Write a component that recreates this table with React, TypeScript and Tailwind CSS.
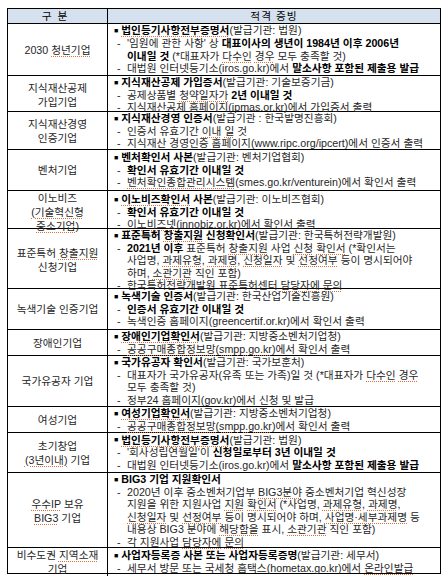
import type { ReactNode } from "react";

const font = { fontFamily: '"Liberation Sans", "Noto Sans CJK KR", sans-serif' };

function U({ children }: { children: ReactNode }) {
  return (
    <span className="underline decoration-dotted decoration-[#e0703a] decoration-[1px] underline-offset-[2px]">
      {children}
    </span>
  );
}

function B({ children }: { children: ReactNode }) {
  return <span className="font-bold text-black">{children}</span>;
}

function Head({ children }: { children: ReactNode }) {
  return (
    <div className="flex items-center whitespace-nowrap">
      <span className="mr-[3px] text-[7px] leading-none text-black">■</span>
      <span>{children}</span>
    </div>
  );
}

function Dash({ children }: { children: ReactNode }) {
  return (
    <div className="flex whitespace-nowrap pl-[3px]">
      <span className="w-[10px] shrink-0">-</span>
      <span>{children}</span>
    </div>
  );
}

function More({ children }: { children: ReactNode }) {
  return <div className="whitespace-nowrap pl-[13px]">{children}</div>;
}

function Row({ h, label, children }: { h: string; label: ReactNode; children: ReactNode }) {
  return (
    <div className={`grid grid-cols-[100px_1fr] border-t border-black ${h}`}>
      <div className="flex flex-col items-center justify-center border-r border-black text-center leading-[14px]">
        {label}
      </div>
      <div className="flex flex-col justify-center pl-[6px] leading-[12.6px]">{children}</div>
    </div>
  );
}

export default function App() {
  return (
    <div className="h-[580px] w-[448px] bg-white pt-2 pl-[7px] text-[10.7px] text-[#262626]" style={font}>
      <div className="w-[434px] border border-black">
        <div className="grid h-[14px] grid-cols-[100px_1fr] bg-[#d6e1ef] leading-[14px] text-black">
          <div className="border-r border-black text-center tracking-[6px]">구분</div>
          <div className="text-center tracking-[1px]">적격 증빙</div>
        </div>

        <Row h="h-[52px]" label={<span>2030 <U>청년기업</U></span>}>
          <Head>
            <U><B>법인등기사항전부증명서</B></U>(발급기관: 법원)
          </Head>
          <Dash>
            '임원에 관한 사항' 상 <B>대표이사의 생년이 1984년 이후 2006년</B>
          </Dash>
          <More>
            <B>이내일 것</B> (*대표자가 <U>다수인</U> <U>경우</U> 모두 충족할 것)
          </More>
          <Dash>
            대법원 인터넷등기소(iros.go.kr)에서 <B>말소사항 포함된 제출용 발급</B>
          </Dash>
        </Row>

        <Row h="h-[36px]" label={<><span>지식재산공제</span><span>가입기업</span></>}>
          <Head>
            <B>지식재산공제 가입증서</B>(발급기관: 기술보증기금)
          </Head>
          <Dash>
            공제상품별 <U>청약일자가</U> <B>2년 이내일 것</B>
          </Dash>
          <Dash>지식재산공제 홈페이지(ipmas.or.kr)에서 가입증서 출력</Dash>
        </Row>

        <Row h="h-[38px]" label={<><span>지식재산경영</span><span>인증기업</span></>}>
          <Head>
            <B>지식재산경영 인증서</B>(발급기관 : 한국발명진흥회)
          </Head>
          <Dash>
            인증서 유효기간 <U>이내</U> <U>일</U> 것
          </Dash>
          <Dash>지식재산 경영인증 홈페이지(www.ripc.org/ipcert)에서 인증서 출력</Dash>
        </Row>

        <Row h="h-[41px]" label="벤처기업">
          <Head>
            <B>벤처확인서 사본</B>(발급기관: 벤처기업협회)
          </Head>
          <Dash>
            <B>확인서 유효기간 이내일 것</B>
          </Dash>
          <Dash>
            <U>벤처확인종합관리시스템</U>(smes.go.kr/venturein)에서 확인서 출력
          </Dash>
        </Row>

        <Row
          h="h-[38px]"
          label={
            <>
              <span>이노비즈</span>
              <U>(기술혁신형</U>
              <U>중소기업)</U>
            </>
          }
        >
          <Head>
            <U><B>이노비즈확인서</B></U> <B>사본</B>(발급기관: 이노비즈협회)
          </Head>
          <Dash>
            <B>확인서 유효기간 이내일 것</B>
          </Dash>
          <Dash>
            <U>이노비즈넷</U>(innobiz.or.kr)에서 확인서 출력
          </Dash>
        </Row>

        <Row
          h="h-[60px]"
          label={
            <>
              <span>
                표준특허 <U>창출지원</U>
              </span>
              <span>신청기업</span>
            </>
          }
        >
          <Head>
            <B>표준특허 <U>창출지원</U> 신청확인서</B>(발급기관: 한국특허전략개발원)
          </Head>
          <Dash>
            <B>2021년 이후</B> 표준특허 <U>창출지원</U> 사업 <U>신청</U> <U>확인서</U> (*확인서는
          </Dash>
          <More>
            사업명, <U>과제유형</U>, <U>과제명</U>, <U>신청일자</U> 및 <U>선정여부</U> 등이 명시되어야
          </More>
          <More>
            하며, <U>소관기관</U> 직인 포함)
          </More>
          <Dash>
            한국특허전략개발원 표준특허센터 <U>담당자에</U> <U>문의</U>
          </Dash>
        </Row>

        <Row h="h-[41px]" label="녹색기술 인증기업">
          <Head>
            <B>녹색기술 인증서</B>(발급기관: 한국산업기술진흥원)
          </Head>
          <Dash>
            <B>인증서 유효기간 이내일 것</B>
          </Dash>
          <Dash>녹색인증 홈페이지(greencertif.or.kr)에서 확인서 출력</Dash>
        </Row>

        <Row h="h-[26px]" label="장애인기업">
          <Head>
            <U><B>장애인기업확인서</B></U>(발급기관: 지방중소벤처기업청)
          </Head>
          <Dash>
            <U>공공구매종합정보망(smpp.go.kr)</U>에서 확인서 출력
          </Dash>
        </Row>

        <Row h="h-[51px]" label="국가유공자 기업">
          <Head>
            <B>국가유공자 확인서</B>(발급기관: 국가보훈처)
          </Head>
          <Dash>
            대표자가 국가유공자(유족 또는 가족)일 것 (*대표자가 <U>다수인</U> <U>경우</U>
          </Dash>
          <More>모두 충족할 것)</More>
          <Dash>정부24 홈페이지(gov.kr)에서 신청 및 발급</Dash>
        </Row>

        <Row h="h-[26px]" label="여성기업">
          <Head>
            <U><B>여성기업확인서</B></U>(발급기관: 지방중소벤처기업청)
          </Head>
          <Dash>
            <U>공공구매종합정보망(smpp.go.kr)</U>에서 확인서 출력
          </Dash>
        </Row>

        <Row
          h="h-[40px]"
          label={
            <>
              <span>초기창업</span>
              <span>
                <U>(3년이내)</U> 기업
              </span>
            </>
          }
        >
          <Head>
            <U><B>법인등기사항전부증명서</B></U>(발급기관: 법원)
          </Head>
          <Dash>
            '회사성립연월일'이 <B>신청일로부터 3년 이내일 것</B>
          </Dash>
          <Dash>
            대법원 인터넷등기소(iros.go.kr)에서 <B>말소사항 포함된 제출용 발급</B>
          </Dash>
        </Row>

        <Row
          h="h-[75px]"
          label={
            <>
              <span>
                <U>우수IP</U> 보유
              </span>
              <span>
                <U>BIG3</U> 기업
              </span>
            </>
          }
        >
          <Head>
            <B>BIG3 기업 지원확인서</B>
          </Head>
          <Dash>
            2020년 이후 중소벤처기업부 <U>BIG3분야</U> 중소벤처기업 혁신성장
          </Dash>
          <More>
            지원을 위한 지원사업 <U>지원</U> <U>확인서</U> (*사업명, <U>과제유형</U>, <U>과제명</U>,
          </More>
          <More>
            <U>신청일자</U> 및 <U>선정여부</U> 등이 명시되어야 하며, <U>사업명·세부과제명</U> 등
          </More>
          <More>
            내용상 BIG3 분야에 <U>해당함을</U> 표시, <U>소관기관</U> 직인 포함)
          </More>
          <Dash>
            각 지원사업 <U>담당자에</U> <U>문의</U>
          </Dash>
        </Row>

        <Row
          h="h-[26px]"
          label={
            <>
              <span>
                비수도권 <U>지역소재</U>
              </span>
              <span>기업</span>
            </>
          }
        >
          <Head>
            <B>사업자등록증 사본 또는 사업자등록증명</B>(발급기관: 세무서)
          </Head>
          <Dash>
            세무서 방문 또는 국세청 홈택스(hometax.go.kr)에서 <U>온라인발급</U>
          </Dash>
        </Row>
      </div>
    </div>
  );
}
